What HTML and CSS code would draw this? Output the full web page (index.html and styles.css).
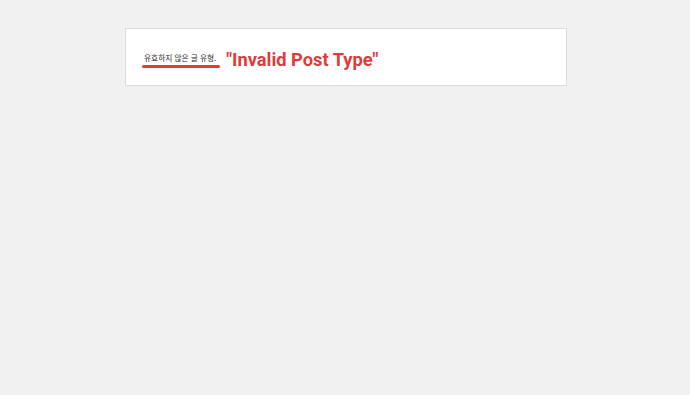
FILE: index.html
```html
<!DOCTYPE html>
<html lang="ko">
<head>
<meta charset="utf-8">
<title>Invalid Post Type</title>
<link rel="stylesheet" href="styles.css">
</head>
<body>
<div class="notice">
  <p class="message"><span class="ko">유효하지 않은 글 유형.</span><span class="label">"Invalid Post Type"</span></p>
</div>
</body>
</html>
```
FILE: styles.css
```css
html, body {
  margin: 0;
  padding: 0;
  background: #f1f1f1;
}
body {
  padding-top: 28px;
}
.notice {
  box-sizing: border-box;
  width: 442px;
  height: 58px;
  margin-left: 125px;
  background: #fff;
  border: 1px solid #dcdcde;
  display: flex;
  align-items: center;
  padding-left: 18px;
}
.message {
  margin: 0;
  margin-top: 6px;
  line-height: 20px;
}
.ko {
  position: relative;
  display: inline-block;
  vertical-align: 5px;
  line-height: 10px;
  font-family: "Noto Sans CJK KR", sans-serif;
  font-size: 7.7px;
  color: #2c2c2c;
}
.ko::after {
  content: "";
  position: absolute;
  left: -2px;
  right: -4px;
  bottom: -5px;
  height: 3px;
  border-radius: 2px;
  background: #df3b3b;
}
.label {
  margin-left: 10px;
  font-family: Roboto, "Liberation Sans", Arial, sans-serif;
  font-weight: bold;
  font-size: 18.3px;
  color: #df3b3b;
}
```
